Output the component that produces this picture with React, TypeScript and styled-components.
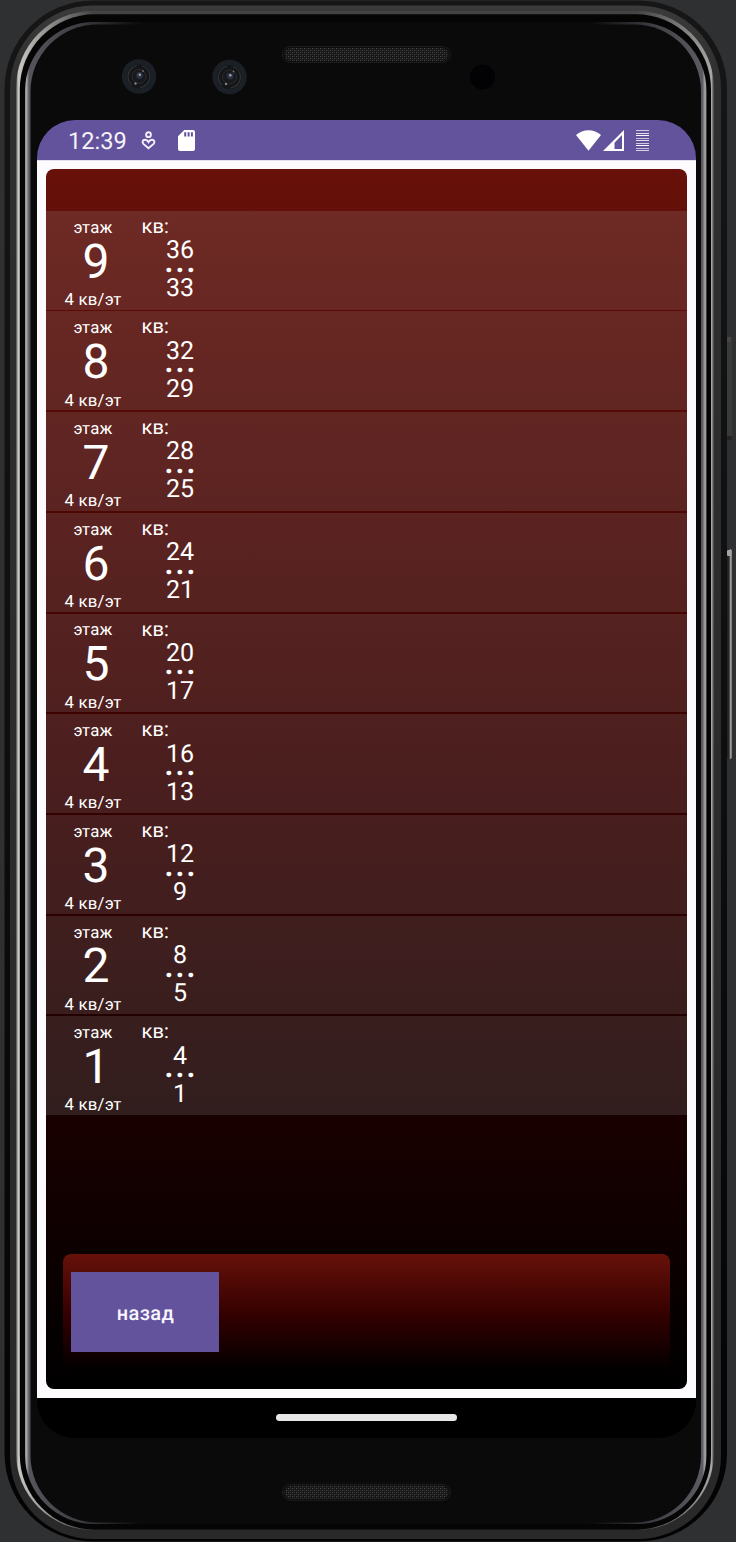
import React from "react";
import styled, { createGlobalStyle } from "styled-components";

const GlobalStyle = createGlobalStyle`
  * { box-sizing: border-box; }
  html, body { margin: 0; padding: 0; background: #2f3032; }
  body {
    font-family: Roboto, "Liberation Sans", sans-serif;
    color: #fff;
    overflow: hidden;
    text-rendering: geometricPrecision;
  }
`;

const Device = styled.div`
  position: relative;
  width: 736px;
  height: 1542px;
  padding: 120px 40px 104px 37px;
  overflow: hidden;
`;

const ShellArt = styled.svg`
  position: absolute;
  inset: 0;
`;

const Screen = styled.main`
  position: relative;
  display: flex;
  flex-direction: column;
  width: 659px;
  height: 1318px;
  border-radius: 38px;
  overflow: hidden;
  background: #000;
`;

const StatusBar = styled.header`
  display: flex;
  justify-content: space-between;
  align-items: center;
  height: 40px;
  flex: none;
  padding: 0 47px 0 31px;
  background: #63539c;
`;

const StatusGroup = styled.div`
  display: flex;
  align-items: center;
`;

const Clock = styled.span`
  width: 73px;
  font-size: 23.6px;
  line-height: 40px;
  padding-top: 1px;
  color: #f6f4fb;
`;

const Content = styled.section`
  flex: 1;
  padding: 8px 8.6px 9px 8.5px;
  background: #fefbff;
  border-top: 1px solid #e4dff0;
`;

const Panel = styled.div`
  display: flex;
  flex-direction: column;
  height: 100%;
  padding-top: 41.8px;
  border-radius: 8px;
  overflow: hidden;
  background: linear-gradient(180deg, #67110a 0%, #630e08 5%, #330000 55%, #000000 100%);
`;

const FloorList = styled.ul`
  display: flex;
  flex-direction: column;
  gap: 1.9px;
  margin: 0;
  padding: 0;
  list-style: none;
`;

const FloorRow = styled.li`
  display: flex;
  height: 98.8px;
  flex: none;
  background: rgba(148, 148, 148, 0.2);
`;

const FloorColumn = styled.div`
  display: flex;
  flex-direction: column;
  align-items: center;
  width: 95px;
  padding-top: 6.9px;
`;

const Caption = styled.span`
  font-size: 16.8px;
  line-height: 20px;
  letter-spacing: 0.2px;
`;

const FloorNumber = styled.span`
  font-size: 48px;
  line-height: 49px;
  margin: -1.1px 0 4.3px 6px;
`;

const FlatsColumn = styled.div`
  display: flex;
  flex-direction: column;
  align-items: center;
  width: 79px;
  padding-top: 5px;
`;

const FlatsLabel = styled.span`
  align-self: flex-start;
  margin: 0 0 3.3px 1px;
  font-size: 20.1px;
  line-height: 20px;
  letter-spacing: 0.1px;
`;

const FlatNumber = styled.span`
  font-size: 25px;
  line-height: 24px;
`;

const Dots = styled.span`
  font-size: 42px;
  line-height: 24px;
  margin: -16.4px 0 6.4px;
`;

const ActionCard = styled.footer`
  height: 118px;
  margin: auto 17.5px 17px;
  padding: 17.5px 8px;
  border-radius: 8px;
  background: linear-gradient(180deg, #67110a 0%, #330000 52%, #000000 100%);
`;

const BackButton = styled.button`
  width: 148px;
  height: 80.5px;
  padding: 2px 0 0 1px;
  border: 0;
  background: #63539c;
  color: #f8f5ff;
  font: 500 20px Roboto, "Liberation Sans", sans-serif;
  letter-spacing: 0.4px;
  text-rendering: geometricPrecision;
`;

const NavBar = styled.nav`
  display: flex;
  flex: none;
  justify-content: center;
  height: 40px;
  padding-top: 16.3px;
  background: #000;
`;

const NavHandle = styled.div`
  width: 181px;
  height: 7px;
  border-radius: 4px;
  background: #e8e8e8;
`;

function Camera({ cx, cy }: { cx: number; cy: number }) {
  return (
    <g transform={`translate(${cx} ${cy})`}>
      <circle r="17.2" fill="#1a2025" />
      <circle r="12" fill="#141618" />
      <circle r="11" fill="none" stroke="#353637" strokeWidth="1.1" strokeDasharray="16 9 24 6" />
      <circle r="7" fill="#17191d" stroke="#2a2c30" strokeWidth="1" />
      <circle cx="0.5" cy="-1" r="3.4" fill="#2c3140" />
      <circle cx="0.8" cy="-1.8" r="1.2" fill="#a3a9b8" />
      <circle cx="4" cy="-5.5" r="0.9" fill="#7b706c" />
      <circle cx="-3.5" cy="7" r="1.2" fill="#8a8480" />
    </g>
  );
}

function Speaker({ y }: { y: number }) {
  return (
    <g>
      <rect x="282.5" y={y} width="168" height="16" rx="8" fill="#0d0d0d" stroke="#1d1d1d" />
      <rect x="284.5" y={y + 1.5} width="164" height="13" rx="6.5" fill="url(#mesh)" />
    </g>
  );
}

function Shell() {
  return (
    <ShellArt width="736" height="1542" viewBox="0 0 736 1542" aria-hidden="true">
      <defs>
        <pattern id="mesh" width="4" height="4" patternUnits="userSpaceOnUse">
          <rect width="4" height="4" fill="#151515" />
          <rect x="0" y="0" width="1.2" height="1.2" fill="#464646" />
          <rect x="2" y="2" width="1.2" height="1.2" fill="#464646" />
          <rect x="2" y="0" width="1" height="1" fill="#2d2d2d" />
          <rect x="0" y="2" width="1" height="1" fill="#2d2d2d" />
        </pattern>
        <linearGradient id="edge" x1="0" y1="0" x2="0" y2="1">
          <stop offset="0" stopColor="#161616" />
          <stop offset="0.5" stopColor="#0e0e0e" />
          <stop offset="1" stopColor="#030303" />
        </linearGradient>
        <linearGradient id="band" x1="0" y1="0" x2="0" y2="1">
          <stop offset="0" stopColor="#3a3a3a" />
          <stop offset="0.05" stopColor="#2f2f2f" />
          <stop offset="1" stopColor="#292929" />
        </linearGradient>
        <linearGradient id="rim" gradientUnits="userSpaceOnUse" x1="16" y1="0" x2="714" y2="0">
          <stop offset="0" stopColor="#4a4846" />
          <stop offset="0.003" stopColor="#c9c6c3" />
          <stop offset="0.03" stopColor="#a5a3a0" />
          <stop offset="0.11" stopColor="#444" />
          <stop offset="0.89" stopColor="#444" />
          <stop offset="0.97" stopColor="#8c8a87" />
          <stop offset="0.9965" stopColor="#a8a6a3" />
          <stop offset="0.999" stopColor="#555" />
          <stop offset="1" stopColor="#444" />
        </linearGradient>
        <linearGradient id="bevel" gradientUnits="userSpaceOnUse" x1="25" y1="0" x2="706.5" y2="0">
          <stop offset="0" stopColor="#888" />
          <stop offset="0.002" stopColor="#aaa" />
          <stop offset="0.006" stopColor="#56555b" />
          <stop offset="0.08" stopColor="#3d3d43" />
          <stop offset="0.17" stopColor="#0a0a0a" />
          <stop offset="0.83" stopColor="#0a0a0a" />
          <stop offset="0.92" stopColor="#3d3d43" />
          <stop offset="0.994" stopColor="#5c5b61" />
          <stop offset="0.998" stopColor="#aaa" />
          <stop offset="1" stopColor="#777" />
        </linearGradient>
        <linearGradient id="key" x1="0" y1="0" x2="1" y2="0">
          <stop offset="0" stopColor="#1c1c1c" />
          <stop offset="0.5" stopColor="#2c2c2c" />
          <stop offset="0.68" stopColor="#a0a0a0" />
          <stop offset="1" stopColor="#777" />
        </linearGradient>
      </defs>
      <rect x="726.5" y="336.5" width="5.5" height="103" rx="2" fill="#393a3a" />
      <rect x="726.5" y="337" width="4.5" height="5" rx="1.5" fill="#454545" />
      <rect x="727" y="436" width="5" height="4" rx="1.5" fill="#222" />
      <rect x="726.5" y="549" width="5.5" height="210" rx="2" fill="url(#key)" />
      <rect x="727" y="550" width="4.5" height="6" rx="1" fill="#a5a5a5" />
      <rect x="4.5" y="0.5" width="722.5" height="1541" rx="88" fill="url(#edge)" />
      <rect x="10" y="5.5" width="711" height="1533.5" rx="83" fill="url(#band)" />
      <rect x="16" y="11" width="698" height="1519" rx="77" fill="url(#rim)" />
      <rect x="19.8" y="14.3" width="691.2" height="1515.5" rx="75" fill="#050505" />
      <rect x="25" y="22" width="681.5" height="1502" rx="69" fill="url(#bevel)" />
      <rect x="30.5" y="24.5" width="670.5" height="1498" rx="67" fill="#0a0a0a" />
      <Camera cx={139} cy={76.5} />
      <Camera cx={229.5} cy={77} />
      <circle cx="482.5" cy="77" r="12.5" fill="#020204" />
      <Speaker y={46.5} />
      <Speaker y={1484.3} />
    </ShellArt>
  );
}

const CareIcon = styled.svg`
  margin: 0 22px 0 0;
`;

const WifiIcon = styled.svg`
  margin-right: 2px;
`;

const SignalIcon = styled.svg`
  margin-right: 12px;
`;

const floors = [9, 8, 7, 6, 5, 4, 3, 2, 1];

const batteryLines = [
  [0, 0.7],
  [3, 0.8],
  [5, 0.95],
  [8, 0.65],
  [10, 0.8],
  [13, 0.7],
  [15, 0.95],
  [18, 0.65],
  [20, 0.75],
];

export default function App() {
  return (
    <>
      <GlobalStyle />
      <Device>
        <Shell />
        <Screen>
          <StatusBar>
            <StatusGroup>
              <Clock>12:39</Clock>
              <CareIcon width="15" height="19" viewBox="0 0 15 19" fill="none" stroke="#f4f1fb" strokeWidth="1.9">
                <circle cx="7.5" cy="3.7" r="2.4" />
                <path d="M7.5 17.3 2.4 12.9C.8 11.2 1.7 8.8 4 8.8c1.6 0 2.8.9 3.5 2.2.7-1.3 1.9-2.2 3.5-2.2 2.3 0 3.2 2.4 1.6 4.1Z" />
              </CareIcon>
              <svg width="17" height="21" viewBox="0 0 17 21" fill="#fff">
                <path fillRule="evenodd" d="M6.3 0H15a2 2 0 0 1 2 2v17a2 2 0 0 1-2 2H2a2 2 0 0 1-2-2V6.3ZM6.2 2.3v4.2h2V2.3Zm3.4 0v4.2h2V2.3Zm3.3 0v4.2h2V2.3Z" />
              </svg>
            </StatusGroup>
            <StatusGroup>
              <WifiIcon width="25" height="21" viewBox="0 0 25 21" fill="#fff">
                <path d="M0 5C7-1.5 18-1.5 25 5L12.5 20.7Z" />
              </WifiIcon>
              <SignalIcon width="21" height="21" viewBox="0 0 21 21" fill="#fff">
                <path fillRule="evenodd" d="M21 0V21H0ZM19 5 11.5 12.7V19H19Z" />
              </SignalIcon>
              <svg width="13" height="21" viewBox="0 0 13 21" fill="#fff">
                {batteryLines.map(([y, opacity]) => (
                  <rect key={y} y={y} width="13" height="1" opacity={opacity} />
                ))}
              </svg>
            </StatusGroup>
          </StatusBar>
          <Content>
            <Panel>
              <FloorList>
                {floors.map((floor) => (
                  <FloorRow key={floor}>
                    <FloorColumn>
                      <Caption>этаж</Caption>
                      <FloorNumber>{floor}</FloorNumber>
                      <Caption>4 кв/эт</Caption>
                    </FloorColumn>
                    <FlatsColumn>
                      <FlatsLabel>кв:</FlatsLabel>
                      <FlatNumber>{floor * 4}</FlatNumber>
                      <Dots>...</Dots>
                      <FlatNumber>{floor * 4 - 3}</FlatNumber>
                    </FlatsColumn>
                  </FloorRow>
                ))}
              </FloorList>
              <ActionCard>
                <BackButton>назад</BackButton>
              </ActionCard>
            </Panel>
          </Content>
          <NavBar>
            <NavHandle />
          </NavBar>
        </Screen>
      </Device>
    </>
  );
}
